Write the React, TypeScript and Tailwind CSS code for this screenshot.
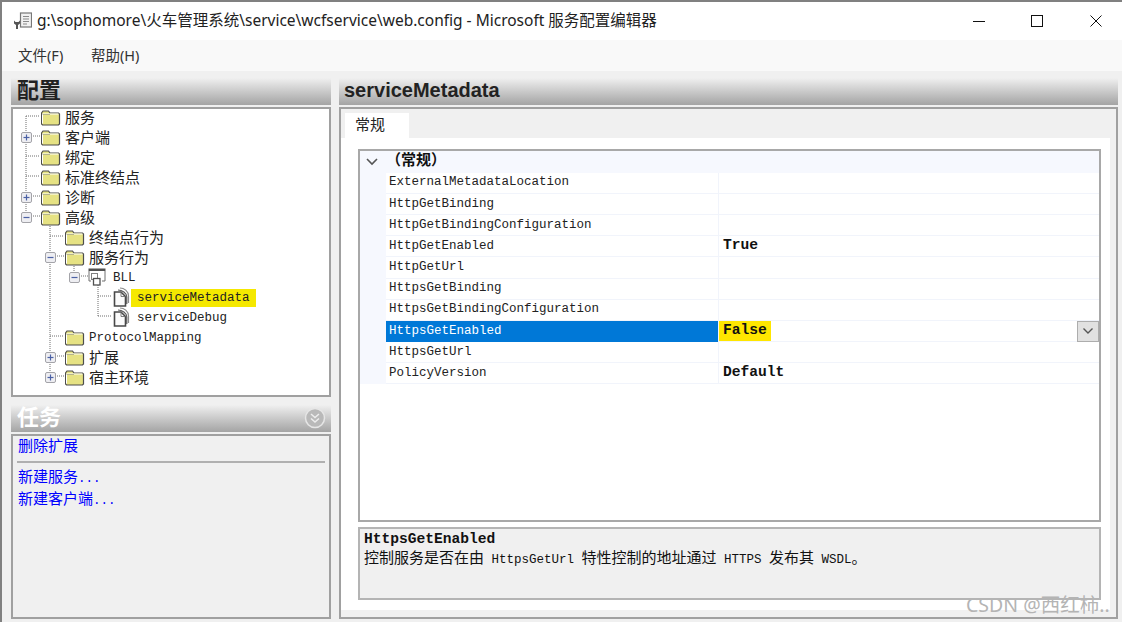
const monoFont = "font-['Liberation_Mono','Noto_Sans_CJK_SC',monospace]";

const FolderIcon = () => (
  <svg width="20" height="17" viewBox="0 0 20 17" className="shrink-0">
    <path d="M0.5 15V4L2 2H7.5L9 4H17.5L18.5 5V15L17.5 16H1.5Z" fill="#e6e283" stroke="#4d4d4d" strokeWidth="1.2" />
    <path d="M1.5 14.5V5H17.5" fill="none" stroke="#ffffff" strokeWidth="1" />
    <path d="M1.5 5.5H9" stroke="#8c8c6a" strokeWidth="0.6" />
  </svg>
);

const PageIcon = () => (
  <svg width="17" height="20" viewBox="0 0 17 20" className="shrink-0">
    <path d="M7 1C11 1 15.5 4 15.5 9V16" fill="none" stroke="#8a8a8a" strokeWidth="1.2" />
    <path d="M5 3C9 3 13.8 6 13.8 10V17" fill="none" stroke="#5a5a5a" strokeWidth="1.2" />
    <path d="M1.5 5H8L12.5 9.5V19H1.5Z" fill="#fbfbfb" stroke="#484848" strokeWidth="1.6" />
    <path d="M8 5V9.5H12.5" fill="none" stroke="#707070" strokeWidth="0.9" />
  </svg>
);

const BindingIcon = () => (
  <svg width="18" height="18" viewBox="0 0 18 18" className="shrink-0">
    <rect x="0.5" y="0.5" width="17" height="2.5" fill="#505050" />
    <path d="M1 3V13H3M17 3V13H14" fill="none" stroke="#707070" strokeWidth="1" />
    <rect x="3.5" y="5.5" width="6" height="6" fill="none" stroke="#808080" strokeWidth="1" />
    <rect x="5.5" y="10.5" width="6.5" height="6.5" fill="#fff" stroke="#505050" strokeWidth="1.3" />
  </svg>
);

const AppIcon = () => (
  <svg width="19" height="18" viewBox="0 0 19 18" className="shrink-0">
    <rect x="7.5" y="1" width="11" height="14" fill="#f2f2f2" stroke="#777" strokeWidth="1.2" />
    <path d="M10 4.5H16M10 7H16M10 9.5H16M10 12H14" stroke="#8a8a8a" strokeWidth="1" />
    <path d="M1 8.5V11.5L3 13V17H5V13L7 11.5V8.5L5.5 10H2.5Z" fill="#555" />
  </svg>
);

const Expander = ({ open }: { open: boolean }) => (
  <svg width="11" height="11" viewBox="0 0 11 11" className="shrink-0">
    <rect x="0.5" y="0.5" width="10" height="10" rx="1.5" fill="#eeeef2" stroke="#a3a3a8" />
    <path d="M2.5 5.5H8.5" stroke="#4c62a5" strokeWidth="1.2" />
    {!open && <path d="M5.5 2.5V8.5" stroke="#4c62a5" strokeWidth="1.2" />}
  </svg>
);

// dotted tree lines, coordinates are relative to the inside of the tree box
const TreeLines = () => {
  const segs = [
    "M13 9V109", "M13 9H27", "M13 49H27", "M13 69H27", "M18 29H27", "M18 89H27", "M18 109H27",
    "M37 119V269", "M37 129H51", "M37 229H51", "M42 149H51", "M42 249H51", "M42 269H51",
    "M61 159V169", "M66 169H75",
    "M85 176V209", "M85 189H99", "M85 209H99",
  ];
  return (
    <svg className="absolute inset-0 w-full h-full pointer-events-none">
      <path d={segs.join(" ")} fill="none" stroke="#6f6f6f" strokeDasharray="1 1" />
    </svg>
  );
};

const TreeRow = ({ indent, expander, label }: { indent: string; expander?: "open" | "closed"; label: string }) => (
  <div className={`h-5 flex items-center ${indent}`}>
    <div className="w-[20px] shrink-0 flex items-center">
      {expander && <Expander open={expander === "open"} />}
    </div>
    <FolderIcon />
    <span className="ml-[4px] whitespace-nowrap text-[15px] text-[#222]">{label}</span>
  </div>
);

const LeafRow = ({ label, selected }: { label: string; selected?: boolean }) => (
  <div className="h-5 flex items-center pl-[100px]">
    <PageIcon />
    <span className={`ml-[1px] mt-[2px] h-[18px] leading-[18px] px-[6px] text-[12.5px] text-[#222] ${selected ? "bg-[#f5e800]" : ""}`}>{label}</span>
  </div>
);

const HeaderBar = ({ children }: { children: React.ReactNode }) => (
  <div className="relative h-[27px] shrink-0 bg-gradient-to-b from-[#f0f0f0] to-[#a4a4a4] flex items-center">
    {children}
  </div>
);

const properties = [
  ["ExternalMetadataLocation", ""],
  ["HttpGetBinding", ""],
  ["HttpGetBindingConfiguration", ""],
  ["HttpGetEnabled", "True"],
  ["HttpGetUrl", ""],
  ["HttpsGetBinding", ""],
  ["HttpsGetBindingConfiguration", ""],
  ["HttpsGetEnabled", "False"],
  ["HttpsGetUrl", ""],
  ["PolicyVersion", "Default"],
];

const PropertyRow = ({ name, value }: { name: string; value: string }) => {
  const selected = name === "HttpsGetEnabled";
  return (
    <div className="relative h-[21.2px] flex">
      <div className="w-[26px] shrink-0 bg-[#f6f8fe]" />
      <div className={`w-[332px] shrink-0 pl-[3px] flex items-center text-[12.5px] border-b ${selected ? "bg-[#0078d7] text-white border-[#0078d7]" : "text-[#222] border-[#f1f4fb]"}`}>
        {name}
      </div>
      <div className="flex-1 flex items-center border-b border-l border-[#f1f4fb] text-[14.6px] font-bold text-[#111]">
        {selected ? (
          <span className="h-full w-[52px] pl-[4px] bg-[#ffe600] flex items-center">{value}</span>
        ) : (
          <span className="pl-[4px]">{value}</span>
        )}
      </div>
      {selected && (
        <div className="absolute right-0 top-0 w-[22px] h-[21px] bg-[#e1e1e1] border border-[#adadad] flex items-center justify-center">
          <svg width="12" height="8" viewBox="0 0 12 8">
            <path d="M1.5 1.5L6 6L10.5 1.5" fill="none" stroke="#555" strokeWidth="1.4" />
          </svg>
        </div>
      )}
    </div>
  );
};

export default function App() {
  return (
    <div className="w-[1122px] h-[622px] overflow-hidden relative flex flex-col bg-[#f0f0f0] border-t-2 border-l-2 border-[#808080] font-['Noto_Sans','Noto_Sans_CJK_SC',sans-serif]">
      {/* title bar */}
      <div className="h-[38px] shrink-0 bg-white flex items-center pl-[11px]">
        <AppIcon />
        <span className="ml-[5px] text-[15.5px] text-[#222] whitespace-nowrap">
          g:\sophomore\火车管理系统\service\wcfservice\web.config - Microsoft 服务配置编辑器
        </span>
        <div className="ml-auto mr-[20px] flex items-center gap-[46px]">
          <svg width="12" height="12" viewBox="0 0 12 12"><path d="M0 6.5H12" stroke="#111" /></svg>
          <svg width="12" height="12" viewBox="0 0 12 12"><rect x="0.5" y="0.5" width="11" height="11" fill="none" stroke="#111" /></svg>
          <svg width="12" height="12" viewBox="0 0 12 12" className="ml-px"><path d="M0.5 0.5L11.5 11.5M11.5 0.5L0.5 11.5" stroke="#111" /></svg>
        </div>
      </div>

      {/* menu */}
      <div className="h-[31px] shrink-0 bg-[#f9f9f9] flex items-center pl-[16px] text-[14.5px] text-[#333]">
        <span className="w-[73px]">文件(F)</span>
        <span>帮助(H)</span>
      </div>

      <div className="flex-1 min-h-0 flex gap-2 pl-[9px] pt-[7px] pb-[3px]">
        {/* left column */}
        <div className="w-[320px] shrink-0 flex flex-col">
          <HeaderBar>
            <span className="pl-[6px] -mt-[6px] text-[22px] font-bold leading-none text-[#222]">配置</span>
          </HeaderBar>
          <div className="mt-[2px] h-[290px] shrink-0 bg-white border-2 border-[#a0a0a0]">
            <div className="relative h-full">
              <TreeLines />
              <div className="relative -mt-[2px] font-['Noto_Sans_CJK_SC',sans-serif]">
                <TreeRow indent="pl-[8px]" label="服务" />
                <TreeRow indent="pl-[8px]" expander="closed" label="客户端" />
                <TreeRow indent="pl-[8px]" label="绑定" />
                <TreeRow indent="pl-[8px]" label="标准终结点" />
                <TreeRow indent="pl-[8px]" expander="closed" label="诊断" />
                <TreeRow indent="pl-[8px]" expander="open" label="高级" />
                <TreeRow indent="pl-[32px]" label="终结点行为" />
                <TreeRow indent="pl-[32px]" expander="open" label="服务行为" />
                <div className={`h-5 flex items-center pl-[56px] ${monoFont}`}>
                  <div className="w-[19px] shrink-0 flex items-center"><Expander open /></div>
                  <BindingIcon />
                  <span className="ml-[7px] mt-[2px] text-[12.5px] text-[#222]">BLL</span>
                </div>
                <div className={monoFont}>
                  <LeafRow label="serviceMetadata" selected />
                  <LeafRow label="serviceDebug" />
                  <div className="h-5 flex items-center pl-[32px]">
                    <div className="w-[20px] shrink-0" />
                    <FolderIcon />
                    <span className="ml-[4px] mt-[2px] text-[12.5px] text-[#222]">ProtocolMapping</span>
                  </div>
                </div>
                <TreeRow indent="pl-[32px]" expander="closed" label="扩展" />
                <TreeRow indent="pl-[32px]" expander="closed" label="宿主环境" />
              </div>
            </div>
          </div>

          <div className="mt-[8px]">
            <HeaderBar>
              <span className="pl-[6px] -mt-[6px] text-[22px] font-bold leading-none text-white">任务</span>
              <svg width="22" height="22" viewBox="0 0 22 22" className="absolute right-[5px] top-[2px]">
                <circle cx="11" cy="11" r="9.5" fill="#b9b9b9" stroke="#e6e6e6" strokeWidth="1.5" />
                <path d="M7 7L11 10.5L15 7M7 11.5L11 15L15 11.5" fill="none" stroke="#ededed" strokeWidth="1.5" />
              </svg>
            </HeaderBar>
          </div>
          <div className={`mt-[2px] flex-1 border-2 border-[#a0a0a0] text-[#0000ff] text-[15px] px-[3px] ${monoFont}`}>
            <div className="h-[25px] flex items-center pl-[2px]">删除扩展</div>
            <div className="h-[2px] bg-[#b0b0b0] mx-[1px]" />
            <div className="mt-[5px] h-[22px] flex items-center pl-[2px]">新建服务<span className="text-[12.5px]">...</span></div>
            <div className="h-[22px] flex items-center pl-[2px]">新建客户端<span className="text-[12.5px]">...</span></div>
          </div>
        </div>

        {/* right column */}
        <div className="w-[779px] shrink-0 flex flex-col">
          <HeaderBar>
            <span className="pl-[5px] -mt-[3px] text-[20px] font-bold font-['Liberation_Sans',sans-serif] text-[#222]">serviceMetadata</span>
          </HeaderBar>
          <div className="mt-[2px] flex-1 min-h-0 flex flex-col border-2 border-[#a0a0a0] pt-[4px] pb-[7px] pr-[6px]">
            <div className="ml-[4px] w-[64px] h-[25px] shrink-0 bg-white flex items-center pl-[10px] pb-[2px] text-[15px] text-[#222]">常规</div>
            <div className={`flex-1 min-h-0 bg-white flex flex-col pl-[17px] pt-[11px] pr-[9px] pb-[10px] ${monoFont}`}>
              <div className="h-[373px] shrink-0 border-2 border-[#a8a8a8]">
                <div className="h-[21.6px] bg-[#f6f8fe] flex items-center">
                  <svg width="26" height="10" viewBox="0 0 26 10" className="shrink-0">
                    <path d="M7 2L12 7L17 2" fill="none" stroke="#555" strokeWidth="1.6" />
                  </svg>
                  <span className="text-[15px] font-bold text-[#111]">（常规）</span>
                </div>
                {properties.map(([name, value]) => (
                  <PropertyRow key={name} name={name} value={value} />
                ))}
              </div>
              <div className="mt-[5px] flex-1 min-h-0 bg-[#f0f0f0] border-2 border-[#b4b4b4] pl-[4px] pt-[1px] text-[#111]">
                <div className="h-[20px] flex items-center text-[14.6px] font-bold">HttpsGetEnabled</div>
                <div className="h-[21px] flex items-center whitespace-pre text-[15px]">
                  控制服务是否在由<span className="text-[12.5px]"> HttpsGetUrl </span>特性控制的地址通过<span className="text-[12.5px]"> HTTPS </span>发布其<span className="text-[12.5px]"> WSDL</span>。
                </div>
              </div>
            </div>
          </div>
        </div>
      </div>

      {/* watermark */}
      <span className="absolute left-[964px] top-[588px] text-[19.5px] text-[#b4b4b4] whitespace-nowrap">CSDN @西红柿..</span>
    </div>
  );
}
